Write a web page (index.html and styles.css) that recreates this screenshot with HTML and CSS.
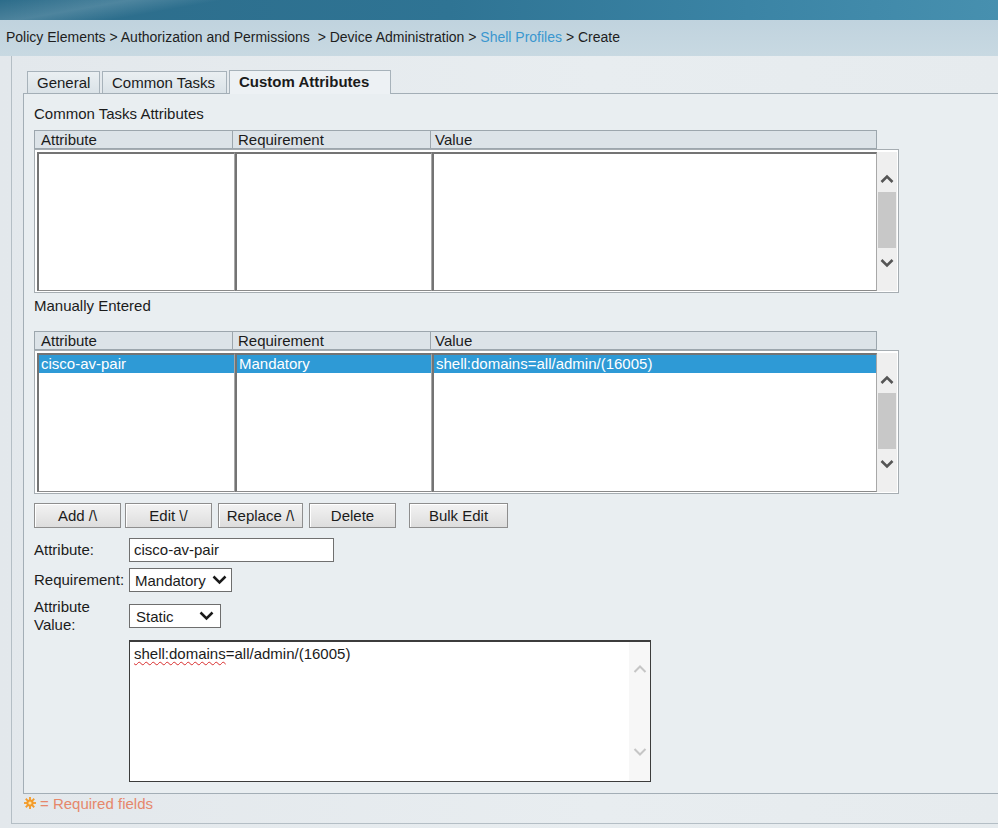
FILE: index.html
```html
<!DOCTYPE html>
<html>
<head>
<meta charset="utf-8">
<title>Shell Profiles - Create</title>
<link rel="stylesheet" href="styles.css">
</head>
<body>
<div class="topbar"></div>
<div class="crumbs">Policy Elements &gt; Authorization and Permissions&nbsp; &gt; Device Administration &gt; <span class="link">Shell Profiles</span> &gt; Create</div>
<div class="panel">
  <div class="tabs">
    <div class="tab t-general">General</div>
    <div class="tab t-common">Common Tasks</div>
    <div class="tab t-custom active">Custom Attributes</div>
  </div>
  <div class="tabbody">
    <div class="section-label">Common Tasks Attributes</div>
    <div class="ghead">
      <div class="hc c1">Attribute</div>
      <div class="hc c2">Requirement</div>
      <div class="hc c3">Value</div>
    </div>
    <div class="gbody">
      <div class="col c1"></div>
      <div class="col c2"></div>
      <div class="col c3"></div>
      <div class="vscroll">
        <div class="up"><svg width="14" height="9" viewBox="0 0 14 9"><polyline points="1.5,8 7,2.5 12.5,8" fill="none" stroke="#555" stroke-width="2.6"/></svg></div>
        <div class="thumb"></div>
        <div class="down"><svg width="14" height="9" viewBox="0 0 14 9"><polyline points="1.5,1 7,6.5 12.5,1" fill="none" stroke="#555" stroke-width="2.6"/></svg></div>
      </div>
    </div>

    <div class="section-label second">Manually Entered</div>
    <div class="ghead">
      <div class="hc c1">Attribute</div>
      <div class="hc c2">Requirement</div>
      <div class="hc c3">Value</div>
    </div>
    <div class="gbody">
      <div class="col c1"><div class="sel">cisco-av-pair</div></div>
      <div class="col c2"><div class="sel">Mandatory</div></div>
      <div class="col c3"><div class="sel">shell:domains=all/admin/(16005)</div></div>
      <div class="vscroll">
        <div class="up"><svg width="14" height="9" viewBox="0 0 14 9"><polyline points="1.5,8 7,2.5 12.5,8" fill="none" stroke="#555" stroke-width="2.6"/></svg></div>
        <div class="thumb"></div>
        <div class="down"><svg width="14" height="9" viewBox="0 0 14 9"><polyline points="1.5,1 7,6.5 12.5,1" fill="none" stroke="#555" stroke-width="2.6"/></svg></div>
      </div>
    </div>

    <div class="buttons">
      <div class="btn b-add">Add /\</div>
      <div class="btn b-edit">Edit \/</div>
      <div class="btn b-replace">Replace /\</div>
      <div class="btn b-delete">Delete</div>
      <div class="btn b-bulk">Bulk Edit</div>
    </div>

    <div class="form">
      <div class="lbl">Attribute:</div>
      <div class="input">cisco-av-pair</div>
      <div class="lbl">Requirement:</div>
      <div class="select s-req">Mandatory<svg class="chev" width="15" height="10" viewBox="0 0 15 10"><polyline points="1.5,1.5 7.5,7.5 13.5,1.5" fill="none" stroke="#1a1a1a" stroke-width="2.5"/></svg></div>
      <div class="lbl two">Attribute<br>Value:</div>
      <div class="select s-val">Static<svg class="chev" width="15" height="10" viewBox="0 0 15 10"><polyline points="1.5,1.5 7.5,7.5 13.5,1.5" fill="none" stroke="#1a1a1a" stroke-width="2.5"/></svg></div>
      <div class="lbl"></div>
      <div class="textarea">
        <div class="ta-text"><span class="spell">shell:domains</span>=all/admin/(16005)</div>
        <div class="ta-scroll">
          <svg width="14" height="9" viewBox="0 0 14 9"><polyline points="1.5,8 7,2.5 12.5,8" fill="none" stroke="#c6c6c6" stroke-width="2"/></svg>
          <svg class="ta-down" width="14" height="9" viewBox="0 0 14 9"><polyline points="1.5,1 7,6.5 12.5,1" fill="none" stroke="#c6c6c6" stroke-width="2"/></svg>
        </div>
      </div>
    </div>
  </div>
  <div class="req">
    <svg class="req-icon" width="12" height="12" viewBox="0 0 12 12">
      <g fill="#f39b2a">
        <circle cx="6" cy="6" r="3.6"/>
        <rect x="5.1" y="0" width="1.8" height="3"/>
        <rect x="5.1" y="9" width="1.8" height="3"/>
        <rect x="0" y="5.1" width="3" height="1.8"/>
        <rect x="9" y="5.1" width="3" height="1.8"/>
        <rect x="5.1" y="0" width="1.8" height="3" transform="rotate(45 6 6)"/>
        <rect x="5.1" y="9" width="1.8" height="3" transform="rotate(45 6 6)"/>
        <rect x="0" y="5.1" width="3" height="1.8" transform="rotate(45 6 6)"/>
        <rect x="9" y="5.1" width="3" height="1.8" transform="rotate(45 6 6)"/>
      </g>
      <circle cx="6" cy="6" r="1.6" fill="#fde3a8"/>
    </svg>
    <span>= Required fields</span>
  </div>
</div>
</body>
</html>
```

FILE: styles.css
```css
* { box-sizing: border-box; }
html, body { margin: 0; padding: 0; }
body {
  width: 998px;
  height: 828px;
  overflow: hidden;
  font-family: "Liberation Sans", Arial, sans-serif;
  font-size: 15px;
  color: #1b1b1b;
  background: linear-gradient(90deg, #e3e8ec 0%, #e8edf0 60%, #e6ebee 100%);
}

.topbar {
  height: 20px;
  background:
    linear-gradient(170deg, rgba(255,255,255,0) 0%, rgba(255,255,255,0.16) 35%, rgba(255,255,255,0) 60%) 0 0 / 260px 20px no-repeat,
    linear-gradient(90deg, #2c6c8a 0%, #2f7494 45%, #3b84a5 75%, #4790af 100%);
}

.crumbs {
  height: 36px;
  line-height: 34px;
  padding-left: 6px;
  font-size: 14px;
  background: linear-gradient(#c0d3de, #c8d9e2);
  color: #1e1e1e;
  white-space: nowrap;
}
.crumbs .link { color: #3a97cf; }

.panel {
  margin-left: 11px;
  height: 768px;
  border-left: 1px solid #b4bec5;
  border-bottom: 1px solid #b4bec5;
  padding: 14px 0 0 11px;
}

.tabs {
  display: flex;
  align-items: flex-end;
  gap: 2px;
  margin-left: 4px;
  height: 24px;
  margin-bottom: -1px;
  position: relative;
  z-index: 1;
}
.tab {
  height: 22px;
  margin-bottom: 1px;
  border: 1px solid #a7b2ba;
  border-bottom: none;
  background: linear-gradient(#eaeff2, #dae2e7);
  padding-left: 9px;
  line-height: 21px;
  color: #1b1b1b;
  white-space: nowrap;
}
.t-general { width: 73px; }
.t-common { width: 125px; }
.t-custom { width: 162px; }
.tab.active {
  height: 24px;
  margin-bottom: 0;
  background: #edf1f4;
  font-weight: bold;
  line-height: 22px;
}

.tabbody {
  height: 701px;
  border: 1px solid #a3aeb6;
  border-right: none;
  background: #e9eef1;
  padding: 12px 0 0 10px;
}

.section-label {
  height: 16px;
  line-height: 16px;
  margin-bottom: 8px;
}
.section-label.second {
  margin-top: 5px;
  margin-bottom: 17px;
}

.ghead {
  display: flex;
  width: 843px;
  height: 19px;
  border: 1px solid #9ca6ad;
  background: #dce3e8;
}
.hc { line-height: 17px; padding-left: 5px; white-space: nowrap; }
.hc.c1 { width: 197px; padding-left: 6px; }
.hc.c2 { width: 198px; border-left: 1px solid #9ca6ad; }
.hc.c3 { flex: 1; border-left: 1px solid #9ca6ad; padding-left: 4px; }

.gbody {
  display: flex;
  width: 865px;
  height: 144px;
  border: 1px solid #a6adb2;
  padding: 2px 1px 1px 2px;
  background: #ffffff;
}
.col {
  background: #fff;
  border-top: 2px solid #747474;
  border-left: 2px solid #747474;
  border-right: 1px solid #a8a8a8;
  border-bottom: 1px solid #8a8a8a;
}
.col.c1 { width: 198px; }
.col.c2 { width: 197px; }
.col.c3 { width: 445px; }
.sel {
  height: 18px;
  line-height: 17px;
  background: #2e9ad6;
  color: #fff;
  padding-left: 2px;
  white-space: nowrap;
}

.vscroll {
  width: 20px;
  background: #efefef;
  display: flex;
  flex-direction: column;
}
.vscroll .up {
  height: 40px;
  display: flex;
  align-items: flex-end;
  justify-content: center;
  padding-bottom: 9px;
}
.vscroll .thumb {
  height: 56px;
  background: #c8c8c8;
  margin: 0 1px;
}
.vscroll .down {
  flex: 1;
  display: flex;
  justify-content: center;
  align-items: flex-start;
  padding-top: 11px;
}
.vscroll svg { display: block; }

.buttons {
  display: flex;
  margin-top: 9px;
  height: 25px;
}
.btn {
  height: 25px;
  border: 1px solid #8e8e8e;
  background: linear-gradient(#f3f3f3, #dddddd);
  box-shadow: inset 1px 1px 0 #ffffff;
  text-align: center;
  line-height: 23px;
  color: #1b1b1b;
  white-space: nowrap;
}
.b-add { width: 87px; }
.b-edit { width: 87px; margin-left: 4px; }
.b-replace { width: 85px; margin-left: 6px; }
.b-delete { width: 87px; margin-left: 6px; }
.b-bulk { width: 99px; margin-left: 13px; }

.form {
  display: grid;
  grid-template-columns: 95px auto;
  justify-items: start;
  align-items: center;
  row-gap: 6px;
  margin-top: 10px;
}
.lbl { line-height: 18px; white-space: nowrap; }
.input {
  width: 205px;
  height: 24px;
  border: 1px solid #707070;
  background: #fff;
  padding-left: 4px;
  line-height: 22px;
}
.select {
  height: 24px;
  border: 1px solid #6e6e6e;
  background: #fff;
  display: flex;
  align-items: center;
  justify-content: space-between;
  padding: 0 4px 0 5px;
  white-space: nowrap;
}
.select .chev { display: block; }
.s-req { width: 103px; }
.s-val { width: 92px; padding-left: 6px; padding-right: 6px; }

.textarea {
  width: 522px;
  height: 142px;
  border: 1px solid #3c3c3c;
  border-top-width: 2px;
  background: #fff;
  display: flex;
}
.ta-text {
  flex: 1;
  padding: 3px 4px;
  line-height: 18px;
  white-space: nowrap;
}
.spell {
  text-decoration: underline wavy #d82c2c;
  text-decoration-thickness: 1px;
  text-underline-offset: 2px;
}
.ta-scroll {
  width: 21px;
  background: #f7f7f7;
  display: flex;
  flex-direction: column;
  align-items: center;
  padding: 22px 0 24px;
}
.ta-scroll svg { display: block; }
.ta-scroll .ta-down { margin-top: auto; }

.req {
  display: flex;
  align-items: center;
  height: 16px;
  margin-top: 1px;
  color: #e6876b;
}
.req-icon { display: block; margin-left: 1px; margin-right: 4px; }
```
